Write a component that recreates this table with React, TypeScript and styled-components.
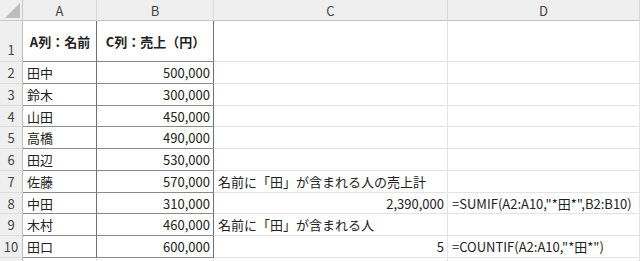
import React from 'react';
import styled, { createGlobalStyle } from 'styled-components';

const GlobalStyle = createGlobalStyle`
  html, body {
    margin: 0;
    padding: 0;
    background: #fff;
  }
  body {
    font-family: "Noto Sans CJK JP", "Noto Sans", sans-serif;
    overflow: hidden;
  }
`;

const rowHeights = [41, 22, 22, 21, 22, 22, 22, 21, 22, 22, 20];

const Sheet = styled.div`
    display: grid;
    grid-template-columns: 23px 74px 117px 234px 1fr;
    grid-template-rows: 21px ${rowHeights.map((h) => `${h}px`).join(' ')};
    width: 640px;
    height: 261px;
    overflow: hidden;
    font-size: 13px;
    color: #222;
`;

const Corner = styled.div`
    position: relative;
    background: #efefef;
    border-right: 1px solid #c9c9c9;
    border-bottom: 1px solid #c9c9c9;
    box-sizing: border-box;

    &::after {
        /* 全選択の三角 */
        content: '';
        position: absolute;
        right: 2px;
        bottom: 2px;
        width: 0;
        height: 0;
        border-left: 15px solid transparent;
        border-bottom: 15px solid #bdbdbd;
    }
`;

const ColHeader = styled.div`
    display: flex;
    align-items: center;
    justify-content: center;
    background: #efefef;
    color: #444;
    font-size: 13px;
    border-right: 1px solid #d9d9d9;
    border-bottom: 1px solid #c4c4c4;
    box-sizing: border-box;
`;

const RowHeader = styled.div<{ $bottom?: boolean }>`
    display: flex;
    align-items: ${({ $bottom }) => ($bottom ? 'flex-end' : 'center')};
    justify-content: center;
    padding-bottom: ${({ $bottom }) => ($bottom ? '2px' : '0')};
    background: #efefef;
    color: #444;
    font-size: 13px;
    border-right: 1px solid #bdbdbd;
    border-bottom: 1px solid #dcdcdc;
    box-sizing: border-box;
`;

const Cell = styled.div<{ $align?: 'left' | 'right' | 'center'; $bold?: boolean; $boxed?: boolean }>`
    display: flex;
    align-items: center;
    justify-content: ${({ $align }) =>
        $align === 'right' ? 'flex-end' : $align === 'center' ? 'center' : 'flex-start'};
    padding: 0 3px 0 4px;
    white-space: nowrap;
    font-weight: ${({ $bold }) => ($bold ? 700 : 400)};
    border-right: 1px solid ${({ $boxed }) => ($boxed ? '#6f6f6f' : '#e3e3e3')};
    border-bottom: 1px solid ${({ $boxed }) => ($boxed ? '#8c8c8c' : '#e3e3e3')};
    box-sizing: border-box;
    min-width: 0;
`;

const people = [
    ['田中', '500,000'],
    ['鈴木', '300,000'],
    ['山田', '450,000'],
    ['高橋', '490,000'],
    ['田辺', '530,000'],
    ['佐藤', '570,000'],
    ['中田', '310,000'],
    ['木村', '460,000'],
    ['田口', '600,000'],
];

// C列・D列の中身（行番号 → 値）
const extra: Record<number, { c?: string; cRight?: boolean; d?: string }> = {
    7: { c: '名前に「田」が含まれる人の売上計' },
    8: { c: '2,390,000', cRight: true, d: '=SUMIF(A2:A10,"*田*",B2:B10)' },
    9: { c: '名前に「田」が含まれる人' },
    10: { c: '5', cRight: true, d: '=COUNTIF(A2:A10,"*田*")' },
};

const App = () => {
    return (
        <>
            <GlobalStyle />
            <Sheet>
                <Corner />
                {['A', 'B', 'C', 'D'].map((col) => (
                    <ColHeader key={col}>{col}</ColHeader>
                ))}

                <RowHeader $bottom>1</RowHeader>
                <Cell $align="center" $bold $boxed>A列：名前</Cell>
                <Cell $align="center" $bold $boxed>C列：売上（円）</Cell>
                <Cell />
                <Cell />

                {people.map(([name, sales], i) => {
                    const row = i + 2;
                    const ex = extra[row] || {};
                    return (
                        <React.Fragment key={row}>
                            <RowHeader>{row}</RowHeader>
                            <Cell $boxed>{name}</Cell>
                            <Cell $align="right" $boxed>{sales}</Cell>
                            <Cell $align={ex.cRight ? 'right' : 'left'}>{ex.c}</Cell>
                            <Cell>{ex.d}</Cell>
                        </React.Fragment>
                    );
                })}

                <RowHeader />
                <Cell />
                <Cell />
                <Cell />
                <Cell />
            </Sheet>
        </>
    );
};

export default App;
